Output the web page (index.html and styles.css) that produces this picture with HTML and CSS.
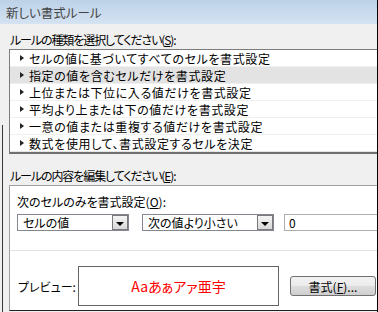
FILE: index.html
```html
<!DOCTYPE html>
<html lang="ja">
<head>
    <meta charset="UTF-8">
    <title>新しい書式ルール</title>
    <link rel="stylesheet" href="styles.css">
</head>
<body>
    <div class="dialog">
        <div class="titlebar">新しい書式ルール</div>
        <div class="content">
            <div class="label">ルールの種類を選択してください(<u>S</u>):</div>
            <ul class="rule-list">
                <li><span class="arrow"></span>セルの値に基づいてすべてのセルを書式設定</li>
                <li class="selected"><span class="arrow"></span>指定の値を含むセルだけを書式設定</li>
                <li><span class="arrow"></span>上位または下位に入る値だけを書式設定</li>
                <li><span class="arrow"></span>平均より上または下の値だけを書式設定</li>
                <li><span class="arrow"></span>一意の値または重複する値だけを書式設定</li>
                <li><span class="arrow"></span>数式を使用して、書式設定するセルを決定</li>
            </ul>
            <div class="label label-edit">ルールの内容を編集してください(<u>E</u>):</div>
            <div class="panel">
                <div class="panel-label">次のセルのみを書式設定(<u>O</u>):</div>
                <div class="controls">
                    <div class="combo combo-type">
                        <span class="combo-text">セルの値</span>
                        <span class="drop"></span>
                    </div>
                    <div class="combo combo-op">
                        <span class="combo-text">次の値より小さい</span>
                        <span class="drop"></span>
                    </div>
                    <div class="textbox">0</div>
                </div>
                <div class="separator"></div>
                <div class="preview-row">
                    <span class="preview-label">プレビュー:</span>
                    <div class="preview">Aaあぁアァ亜宇</div>
                    <button class="format-btn">書式(<u>F</u>)...</button>
                </div>
            </div>
        </div>
    </div>
</body>
</html>
```

FILE: styles.css
```css
body {
    margin: 0;
    padding: 0;
    background: #f0f0f0;
    font-family: "Noto Sans CJK JP", sans-serif;
    font-size: 12px;
    font-feature-settings: "palt";
    color: #000;
}
.dialog {
    position: relative;
    width: 377px;
    height: 312px;
    border-right: 1px solid #000;
    overflow: hidden;
    background: #f0f0f0;
}
/* edge of the window behind */
.dialog::before {
    content: "";
    position: absolute;
    left: 2px;
    top: 125px;
    bottom: 0;
    width: 1px;
    background: #3a3a3a;
}
.titlebar {
    height: 24px;
    line-height: 25px;
    padding-left: 6px;
    font-size: 12.5px;
    color: #444;
    background: linear-gradient(#bcd1e8, #d5e3f2);
}
.content {
    padding-top: 8px;
}
.label {
    height: 17px;
    line-height: 16px;
    padding-left: 10px;
    letter-spacing: -1.1px;
    white-space: nowrap;
}
.rule-list {
    list-style: none;
    margin: 0 0 0 9px;
    padding: 0;
    width: 400px;
    background: #fff;
    border: 1px solid #7c7c7c;
    border-bottom: 2px solid #707070;
}
.rule-list li {
    height: 16px;
    line-height: 17px;
    border-bottom: 1px solid #f0f0f0;
    display: flex;
    align-items: center;
    letter-spacing: 0.6px;
    white-space: nowrap;
}
.rule-list li:last-child {
    border-bottom: 1px solid #e4e4e4;
}
.rule-list li.selected {
    background: #e3e3e3;
}
.arrow {
    width: 0;
    height: 0;
    margin: 0 5px 0 10px;
    border-top: 3px solid transparent;
    border-bottom: 3px solid transparent;
    border-left: 4px solid #222;
}
.label-edit {
    margin-top: 14px;
    height: 17px;
}
.panel {
    margin-left: 9px;
    width: 400px;
    height: 126px;
    background: #fff;
    border: 1px solid #a0a0a0;
    border-bottom: 1px solid #222;
    padding: 8px 0 0 7px;
    box-sizing: border-box;
}
.panel-label {
    height: 16px;
    line-height: 16px;
    white-space: nowrap;
}
.controls {
    display: flex;
    margin-top: 4px;
    gap: 13px;
}
.combo {
    height: 17px;
    box-sizing: border-box;
    border: 1px solid #828790;
    display: flex;
    align-items: center;
    justify-content: space-between;
    white-space: nowrap;
}
.combo-type {
    width: 112px;
}
.combo-op {
    width: 132px;
}
.combo-text {
    padding-left: 5px;
    line-height: 15px;
}
.drop {
    width: 16px;
    height: 15px;
    box-sizing: border-box;
    border: 1px solid #7a7a7a;
    background: linear-gradient(#f4f4f4, #d8d8d8);
    display: flex;
    align-items: center;
    justify-content: center;
}
.drop::after {
    content: "";
    width: 0;
    height: 0;
    margin-top: 2px;
    border-left: 4px solid transparent;
    border-right: 4px solid transparent;
    border-top: 4px solid #000;
}
.textbox {
    width: 120px;
    height: 17px;
    box-sizing: border-box;
    border: 1px solid #abadb3;
    padding-left: 4px;
    line-height: 15px;
    margin-left: -3px;
}
.separator {
    height: 1px;
    background: #e2e2e2;
    margin: 19px 0 0 -7px;
}
.preview-row {
    display: flex;
    align-items: center;
    margin-top: 15px;
}
.preview-label {
    width: 60px;
    padding-left: 1px;
}
.preview {
    width: 201px;
    height: 40px;
    box-sizing: border-box;
    border: 1px solid #646464;
    color: #f00;
    font-size: 14px;
    line-height: 38px;
    text-align: center;
    white-space: nowrap;
}
.format-btn {
    margin-left: 11px;
    width: 86px;
    height: 20px;
    padding: 0;
    font-family: inherit;
    font-size: 12px;
    color: #000;
    border: 1px solid #707070;
    border-radius: 3px;
    background: linear-gradient(#f2f2f2 0%, #ebebeb 50%, #dddddd 51%, #cfcfcf 100%);
}
```
